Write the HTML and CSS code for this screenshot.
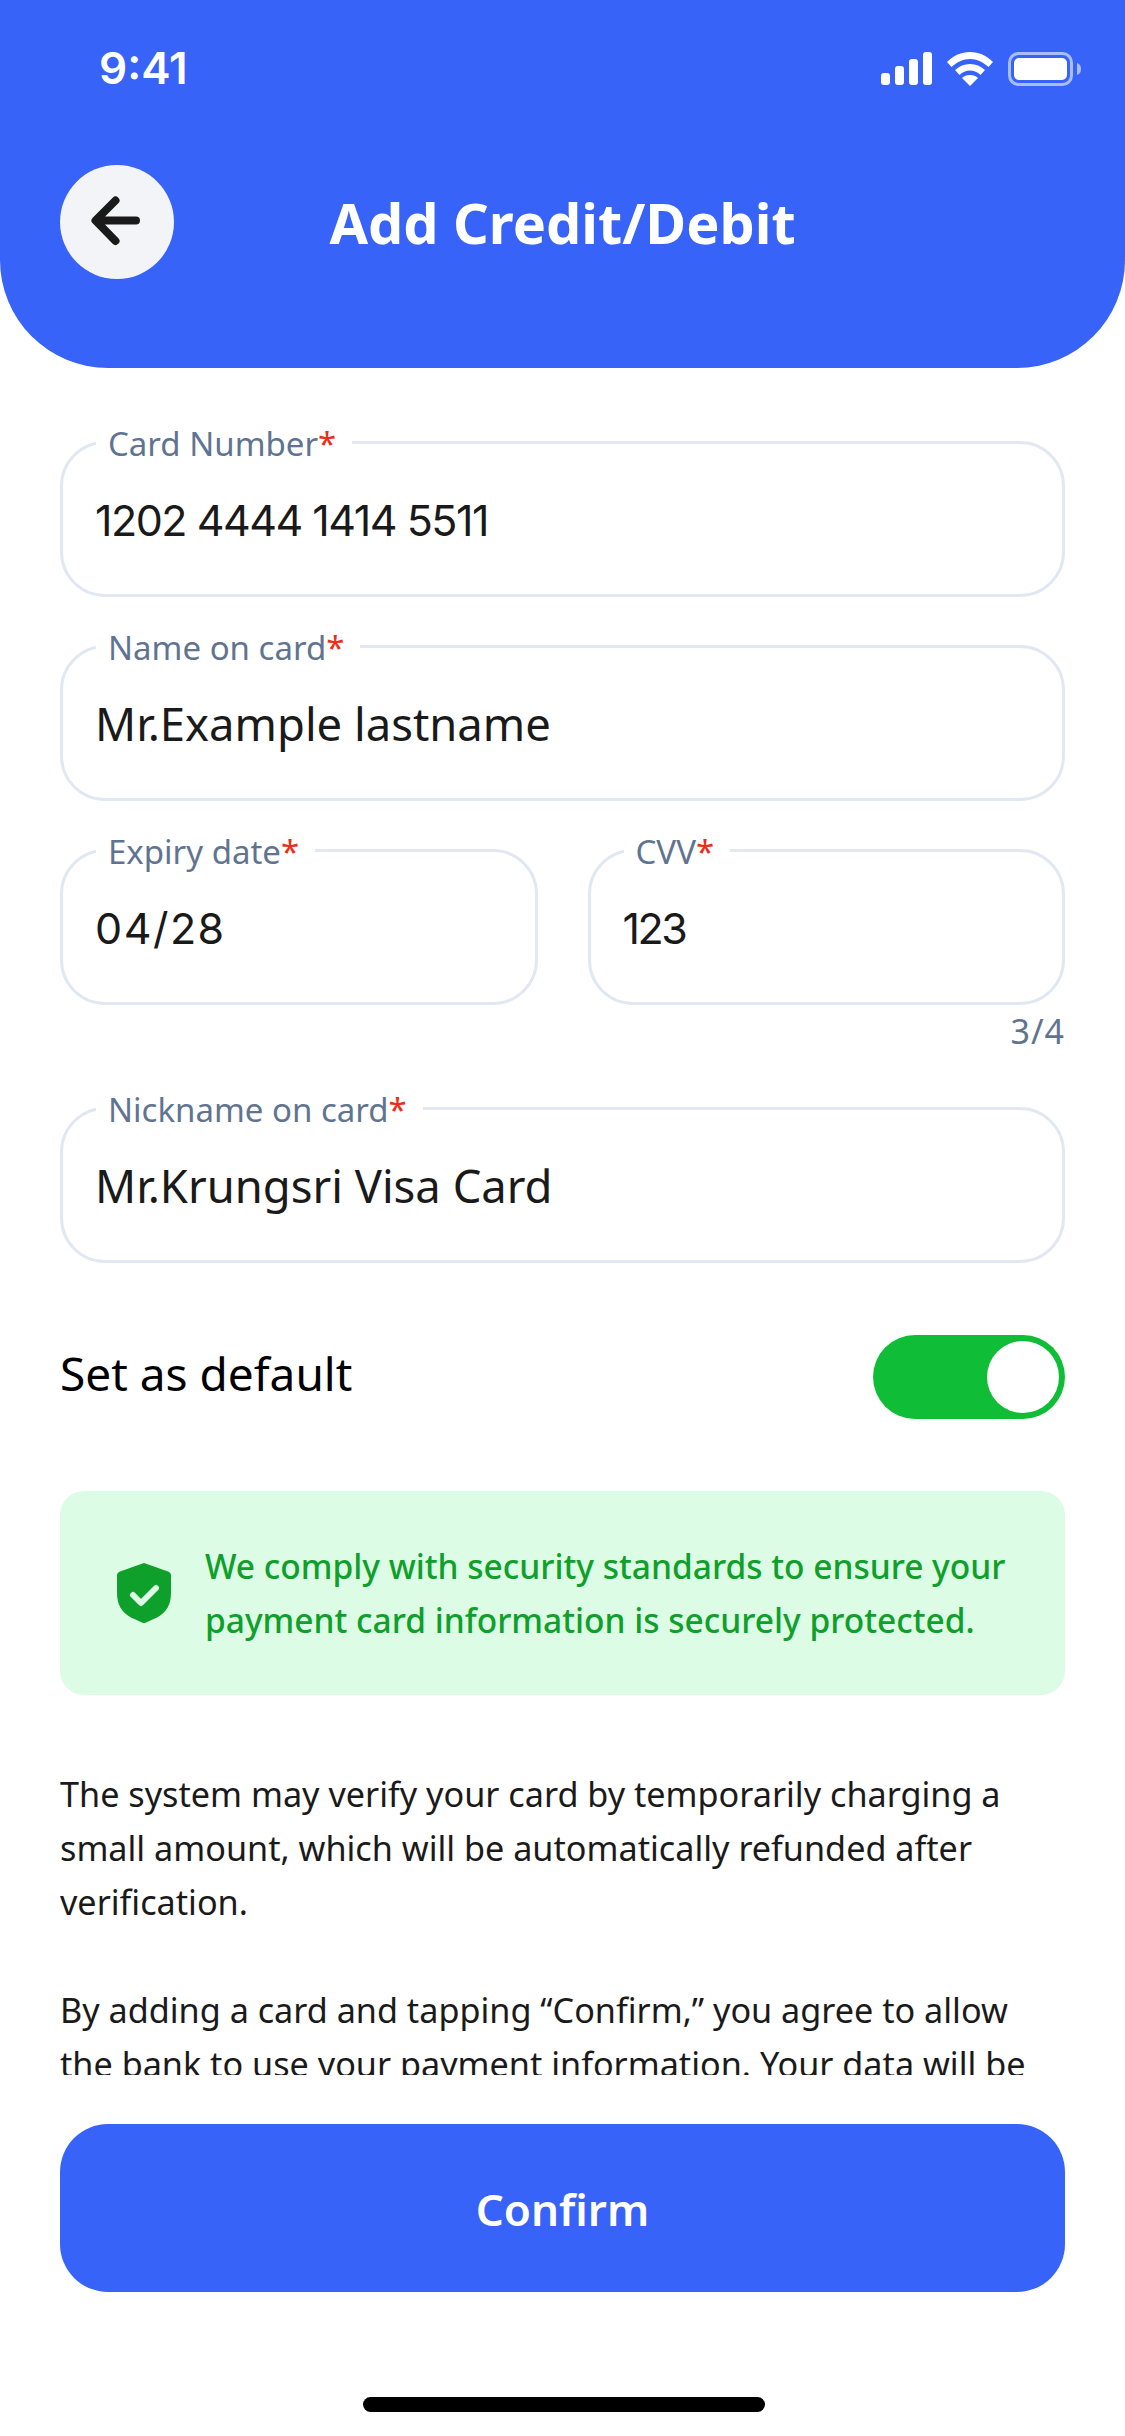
FILE: index.html
```html
<!DOCTYPE html>
<html lang="en">
<head>
<meta charset="utf-8">
<title>Add Credit/Debit</title>
<link rel="stylesheet" href="styles.css">
</head>
<body>
<div class="screen">
  <header class="header">
    <div class="status">
      <span class="time">9:41</span>
      <div class="status-icons">
        <svg width="51" height="33" viewBox="0 0 51 33" fill="#fff"><rect x="0" y="21" width="9" height="12" rx="3"/><rect x="14" y="14" width="9" height="19" rx="3"/><rect x="28" y="7" width="9" height="26" rx="3"/><rect x="42" y="0" width="9" height="33" rx="3"/></svg>
        <svg width="46" height="34" viewBox="0 0 46 34" fill="#fff"><path d="M23 0C14 0 6.500 3.500 0 10l4.500 5C10 10 16 7 23 7s13 3 18.500 8L46 10C39.500 3.500 32 0 23 0z"/><path d="M23 12c-6 0-10.500 2-15 6l4.500 5c3-3 6.500-4.500 10.500-4.500S30.500 20 33.500 23l4.500-5c-4.500-4-9-6-15-6z"/><path d="M23 23c-3.500 0-6 1-8 3l8 8 8-8c-2-2-4.500-3-8-3z"/></svg>
        <svg width="73" height="34" viewBox="0 0 73 34"><rect x="1.500" y="1.500" width="62" height="31" rx="9" fill="none" stroke="#a9bcfb" stroke-width="3"/><rect x="6" y="6" width="53" height="22" rx="5" fill="#fff"/><path d="M69 11c3 1 4 3 4 6s-1 5-4 6z" fill="#a9bcfb"/></svg>
      </div>
    </div>
    <div class="nav">
      <button class="back" aria-label="Back">
        <svg width="60" height="60" viewBox="0 0 60 60" fill="none" stroke="#1a1a1a" stroke-width="8" stroke-linecap="round" stroke-linejoin="round"><path d="M49 28.500H9M28.500 8.500 8.500 28.500 28.500 49"/></svg>
      </button>
      <h1 class="title">Add Credit/Debit</h1>
    </div>
  </header>

  <main class="content">
    <div class="field">
      <span class="label">Card Number<i>*</i></span>
      <span class="value digits digits-long">1202 4444 1414 5511</span>
    </div>
    <div class="field">
      <span class="label">Name on card<i>*</i></span>
      <span class="value">Mr.Example lastname</span>
    </div>
    <div class="field-row">
      <div class="field">
        <span class="label">Expiry date<i>*</i></span>
        <span class="value digits digits-date">04/28</span>
      </div>
      <div class="cvv">
        <div class="field">
          <span class="label">CVV<i>*</i></span>
          <span class="value digits digits-short">123</span>
        </div>
        <span class="count">3/4</span>
      </div>
    </div>
    <div class="field">
      <span class="label">Nickname on card<i>*</i></span>
      <span class="value">Mr.Krungsri Visa Card</span>
    </div>

    <div class="default-row">
      <span class="default-label">Set as default</span>
      <span class="toggle"><span class="knob"></span></span>
    </div>

    <div class="notice">
      <svg class="shield" width="54" height="60" viewBox="0 0 54 60"><path d="M27 0 3 8.500C1 9.300 0 10.500 0 12.500V30c0 12 5 19.500 14 24.500L25 59.600c1.300.6 2.700.6 4 0L40 54.500C49 49.500 54 42 54 30V12.500c0-2-1-3.200-3-4z" fill="#0f9f2b"/><path d="M16 32l8 8 15-15" fill="none" stroke="#ddfce5" stroke-width="6" stroke-linecap="round" stroke-linejoin="round"/></svg>
      <p>We comply with security standards to ensure your payment card information is securely protected.</p>
    </div>

    <div class="terms">
      <p>The system may verify your card by temporarily charging a small amount, which will be automatically refunded after verification.</p>
      <p>By adding a card and tapping “Confirm,” you agree to allow the bank to use your payment information. Your data will be</p>
    </div>
  </main>

  <footer class="footer">
    <button class="confirm">Confirm</button>
    <div class="home"></div>
  </footer>
</div>
</body>
</html>
```
FILE: styles.css
```css
* { box-sizing: border-box; }
html, body { margin: 0; padding: 0; background: #fff; }
body { font-family: "Noto Sans", "Open Sans", sans-serif; }
.screen { width: 1125px; height: 2436px; display: flex; flex-direction: column; overflow: hidden; }

.header { height: 368px; background: #3763f8; border-radius: 0 0 108px 108px; padding: 0 60px; flex: none; }
.status { height: 135px; display: flex; justify-content: space-between; align-items: flex-start; padding-top: 46px; }
.time { font-family: Inter, sans-serif; font-weight: 600; font-size: 44px; line-height: 44px; color: #fff; margin-left: 39px; }
.status-icons { display: flex; align-items: flex-start; gap: 15px; margin-right: -16px; margin-top: 6px; }
.nav { position: relative; height: 114px; margin-top: 30px; display: flex; align-items: center; justify-content: center; }
.back { position: absolute; left: 0; top: 0; width: 114px; height: 114px; border: none; border-radius: 50%; background: #f2f4f7; padding: 0; display: flex; align-items: center; justify-content: center; }
.title { margin: 0; font-size: 55.800px; font-weight: 700; color: #fff; line-height: 60px; }

.content { flex: 1; min-height: 0; overflow: hidden; padding: 73px 60px 0; display: flex; flex-direction: column; }
.content > .field { margin-bottom: 48px; flex: none; }
.field { position: relative; height: 156px; border: 3px solid #e2e8f3; border-radius: 45px; display: flex; align-items: center; padding-left: 32px; }
.label { position: absolute; left: 33px; top: -22px; background: #fff; padding: 0 16px 0 12px; font-size: 33px; line-height: 44px; color: #5f7491; white-space: nowrap; }
.label i { color: #f22b16; font-style: normal; }
.value { font-size: 45.400px; line-height: 60px; color: #1a1a1a; white-space: nowrap; }
.digits { font-family: Inter, sans-serif; font-size: 43px; position: relative; top: 1px; }
.digits-long { letter-spacing: -1.500px; }
.digits-date { letter-spacing: 1.500px; }
.digits-short { letter-spacing: -2.500px; }

.field-row { display: grid; grid-template-columns: 1fr 1fr; gap: 50px; height: 210px; margin-bottom: 48px; flex: none; }
.cvv { display: flex; flex-direction: column; }
.count { align-self: flex-end; font-size: 34px; letter-spacing: 1px; line-height: 44px; color: #5f7491; margin-top: 4px; }

.default-row { display: flex; justify-content: space-between; align-items: center; height: 84px; margin-top: 24px; flex: none; }
.default-label { font-size: 46px; color: #000; position: relative; bottom: 4px; }
.toggle { width: 192px; height: 84px; border-radius: 42px; background: #10bd36; padding: 6px; display: flex; justify-content: flex-end; }
.knob { width: 72px; height: 72px; border-radius: 50%; background: #fff; }

.notice { margin-top: 72px; height: 204px; flex: none; background: #ddfce5; border-radius: 24px; display: flex; align-items: center; padding-left: 57px; gap: 34px; }
.shield { flex: none; }
.notice p { margin: 0; font-size: 33.500px; font-weight: 500; line-height: 54px; color: #0f9f2b; width: 830px; }

.terms { margin-top: 72px; height: 308px; overflow: hidden; flex: none; padding-right: 20px; }
.terms p { margin: 0 0 54px; font-size: 34.200px; line-height: 54px; color: #1a1a1a; }

.footer { flex: none; height: 312px; padding: 0 60px; position: relative; }
.confirm { display: block; width: 100%; height: 168px; border: none; border-radius: 48px; background: #3763f8; color: #fff; font-family: inherit; font-size: 44px; font-weight: 600; padding-top: 2px; }
.home { position: absolute; left: 363px; bottom: 24px; width: 402px; height: 15px; border-radius: 8px; background: #000; }
```
